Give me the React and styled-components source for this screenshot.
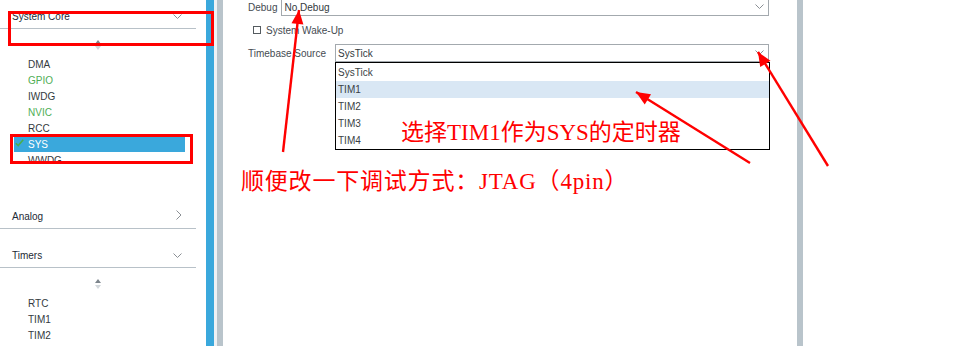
import styled, { createGlobalStyle } from "styled-components";

const GlobalStyle = createGlobalStyle`
  html, body {
    margin: 0;
    padding: 0;
    background: #ffffff;
    overflow: hidden;
  }
  body {
    font-family: "Liberation Sans", Arial, sans-serif;
  }
`;

const coreItems = [
  { name: "DMA" },
  { name: "GPIO", tone: "green" },
  { name: "IWDG" },
  { name: "NVIC", tone: "green" },
  { name: "RCC" },
  { name: "SYS", selected: true },
  { name: "WWDG" },
];

const timerItems = ["RTC", "TIM1", "TIM2"];

const sourceOptions = ["SysTick", "TIM1", "TIM2", "TIM3", "TIM4"];

const arrows = [
  { x1: 283, y1: 152, x2: 299, y2: 10 },
  { x1: 750, y1: 163, x2: 636, y2: 92 },
  { x1: 828, y1: 166, x2: 758, y2: 52 },
];

function ChevronDown() {
  return (
    <svg width="9" height="6" viewBox="0 0 9 6">
      <polyline points="0.5,0.5 4.5,4.5 8.5,0.5" fill="none" stroke="#8a8f94" strokeWidth="1" />
    </svg>
  );
}

function ChevronRight() {
  return (
    <svg width="6" height="10" viewBox="0 0 6 10">
      <polyline points="0.5,0.5 5,5 0.5,9.5" fill="none" stroke="#8a8f94" strokeWidth="1" />
    </svg>
  );
}

function Check() {
  return (
    <svg width="9" height="8" viewBox="0 0 9 8">
      <polyline points="0.8,4.2 3.2,6.6 8.2,0.8" fill="none" stroke="#4cae4c" strokeWidth="1.6" />
    </svg>
  );
}

// arrow head polygon from the tail towards the tip
function headPoints({ x1, y1, x2, y2 }, len = 14, half = 6) {
  const dx = x2 - x1;
  const dy = y2 - y1;
  const d = Math.hypot(dx, dy);
  const ux = dx / d;
  const uy = dy / d;
  const bx = x2 - ux * len;
  const by = y2 - uy * len;
  return `${x2},${y2} ${bx - uy * half},${by + ux * half} ${bx + uy * half},${by - ux * half}`;
}

function Category({ title, open }) {
  return (
    <CategoryHeader>
      <span>{title}</span>
      {open ? <ChevronDown /> : <ChevronRight />}
    </CategoryHeader>
  );
}

function App() {
  return (
    <Page>
      <GlobalStyle />
      <Sidebar>
        <Category title="System Core" open />
        <ScrollNub>
          <NubUp />
          <NubDown />
        </ScrollNub>
        <ItemList $height={106}>
          {coreItems.map((item) => (
            <Item key={item.name} $tone={item.tone} $selected={item.selected}>
              {item.selected && (
                <CheckSlot>
                  <Check />
                </CheckSlot>
              )}
              {item.name}
            </Item>
          ))}
        </ItemList>
        <CategoryGap $size={38} />
        <Category title="Analog" />
        <CategoryGap $size={10} />
        <Category title="Timers" open />
        <ScrollNub>
          <NubUp />
          <NubDown />
        </ScrollNub>
        <ItemList $height={52}>
          {timerItems.map((name) => (
            <Item key={name}>{name}</Item>
          ))}
        </ItemList>
      </Sidebar>
      <BlueBar />
      <Gutter />
      <GrayBar />
      <Main>
        <Form>
          <Row>
            <Label>Debug</Label>
            <Select $gap={4}>
              <span>No Debug</span>
              <ChevronDown />
            </Select>
          </Row>
          <CheckRow>
            <CheckBox />
            <Label>System Wake-Up</Label>
          </CheckRow>
          <Row $top={8}>
            <Label>Timebase Source</Label>
            <Select $gap={9}>
              <span>SysTick</span>
              <ChevronDown />
              <Dropdown>
                {sourceOptions.map((opt) => (
                  <Option key={opt} $active={opt === "TIM1"}>
                    {opt}
                  </Option>
                ))}
              </Dropdown>
            </Select>
          </Row>
        </Form>
      </Main>
      <GrayBar />
      <RightSpace />

      <Overlay>
        <RedBox $x={8} $y={11} $w={206} $h={35} />
        <RedBox $x={10} $y={134} $w={183} $h={30} />
        <Note $x={401} $y={119}>选择TIM1作为SYS的定时器</Note>
        <Note $x={241} $y={168} $spacing={0.8}>顺便改一下调试方式：JTAG（4pin）</Note>
        <ArrowCanvas width="979" height="346" viewBox="0 0 979 346">
          {arrows.map((a, i) => (
            <g key={i}>
              <line x1={a.x1} y1={a.y1} x2={a.x2} y2={a.y2} stroke="#ff0000" strokeWidth="2.4" />
              <polygon points={headPoints(a)} fill="#ff0000" />
            </g>
          ))}
        </ArrowCanvas>
      </Overlay>
    </Page>
  );
}

const Page = styled.div`
  position: relative;
  display: flex;
  width: 979px;
  height: 346px;
  overflow: hidden;
  background: #ffffff;
`;

const Sidebar = styled.div`
  width: 206px;
  flex-shrink: 0;
  display: flex;
  flex-direction: column;
  font-size: 10px;
  color: #333;
  overflow: hidden;
`;

const CategoryHeader = styled.div`
  width: 196px;
  height: 29px;
  flex-shrink: 0;
  box-sizing: border-box;
  border-bottom: 1px solid #b8c1c8;
  display: flex;
  align-items: flex-end;
  justify-content: space-between;
  padding: 0 14px 5px 12px;
  font-size: 10px;
  line-height: 12px;
  color: #1d2a36;

  svg {
    margin-bottom: 3px;
  }
`;

const CategoryGap = styled.div`
  height: ${(p) => p.$size}px;
  flex-shrink: 0;
`;

const ScrollNub = styled.div`
  width: 196px;
  height: 27px;
  flex-shrink: 0;
  display: flex;
  flex-direction: column;
  align-items: center;
  justify-content: center;
  gap: 2px;
  padding-top: 5px;
  box-sizing: border-box;
`;

const NubUp = styled.div`
  width: 0;
  height: 0;
  border-left: 3px solid transparent;
  border-right: 3px solid transparent;
  border-bottom: 4px solid #7d858c;
`;

const NubDown = styled.div`
  width: 0;
  height: 0;
  border-left: 3px solid transparent;
  border-right: 3px solid transparent;
  border-top: 4px solid #d3d8dc;
`;

const ItemList = styled.div`
  height: ${(p) => p.$height}px;
  flex-shrink: 0;
  overflow: hidden;
  display: flex;
  flex-direction: column;
`;

const Item = styled.div`
  position: relative;
  width: 171px;
  height: 16px;
  flex-shrink: 0;
  margin-left: 14px;
  padding-left: 14px;
  box-sizing: border-box;
  display: flex;
  align-items: center;
  font-size: 10px;
  color: ${(p) => (p.$selected ? "#ffffff" : p.$tone === "green" ? "#4fae55" : "#333a40")};
  background: ${(p) => (p.$selected ? "#3aa8dc" : "transparent")};
`;

const CheckSlot = styled.span`
  position: absolute;
  left: 1px;
  top: 3px;
  display: flex;
`;

const BlueBar = styled.div`
  width: 8px;
  flex-shrink: 0;
  background: #3aa8dc;
`;

const Gutter = styled.div`
  width: 3px;
  flex-shrink: 0;
  background: #eef1f4;
`;

const GrayBar = styled.div`
  width: 6px;
  flex-shrink: 0;
  background: #b9c4cb;
`;

const Main = styled.div`
  width: 574px;
  flex-shrink: 0;
  background: #ffffff;
  padding-left: 25px;
  box-sizing: border-box;
`;

const RightSpace = styled.div`
  flex: 1;
  background: #ffffff;
`;

const Form = styled.div`
  margin-top: -2px;
  width: 521px;
  display: flex;
  flex-direction: column;
  font-size: 10px;
`;

const Row = styled.div`
  display: flex;
  align-items: center;
  height: 18px;
  flex-shrink: 0;
  margin-top: ${(p) => p.$top || 0}px;
`;

const Label = styled.span`
  color: #454b52;
  font-size: 10px;
  white-space: nowrap;
`;

const Select = styled.div`
  position: relative;
  flex: 1;
  height: 18px;
  margin-left: ${(p) => p.$gap}px;
  border: 1px solid #a3a9ae;
  box-sizing: border-box;
  display: flex;
  align-items: center;
  justify-content: space-between;
  padding: 0 4px 0 2px;
  color: #333a40;
  background: #ffffff;

  > svg {
    margin-top: -1px;
  }
`;

const CheckRow = styled.div`
  display: flex;
  align-items: center;
  height: 12px;
  flex-shrink: 0;
  margin-top: 8px;
  padding-left: 5px;
  gap: 5px;
`;

const CheckBox = styled.div`
  width: 8px;
  height: 8px;
  border: 1px solid #555b60;
  box-sizing: border-box;
  background: #ffffff;
`;

const Dropdown = styled.div`
  position: absolute;
  top: calc(100% + 1px);
  left: -1px;
  right: -2px;
  border: 1px solid #000000;
  background: #ffffff;
  display: flex;
  flex-direction: column;
  padding-top: 1px;
  z-index: 2;
`;

const Option = styled.div`
  height: 17px;
  display: flex;
  align-items: center;
  padding-left: 2px;
  color: #3a3f45;
  background: ${(p) => (p.$active ? "#d9e7f4" : "transparent")};
`;

const Overlay = styled.div`
  position: absolute;
  inset: 0;
  pointer-events: none;
  z-index: 5;
`;

const RedBox = styled.div`
  position: absolute;
  left: ${(p) => p.$x}px;
  top: ${(p) => p.$y}px;
  width: ${(p) => p.$w}px;
  height: ${(p) => p.$h}px;
  border: 3px solid #ff0000;
  box-sizing: border-box;
`;

const Note = styled.div`
  position: absolute;
  left: ${(p) => p.$x}px;
  top: ${(p) => p.$y}px;
  font-family: "Liberation Serif", "Noto Sans CJK SC", serif;
  font-size: 23px;
  line-height: 28px;
  letter-spacing: ${(p) => p.$spacing || 0}px;
  color: #ff0000;
  white-space: nowrap;
`;

const ArrowCanvas = styled.svg`
  position: absolute;
  left: 0;
  top: 0;
`;

export default App;
